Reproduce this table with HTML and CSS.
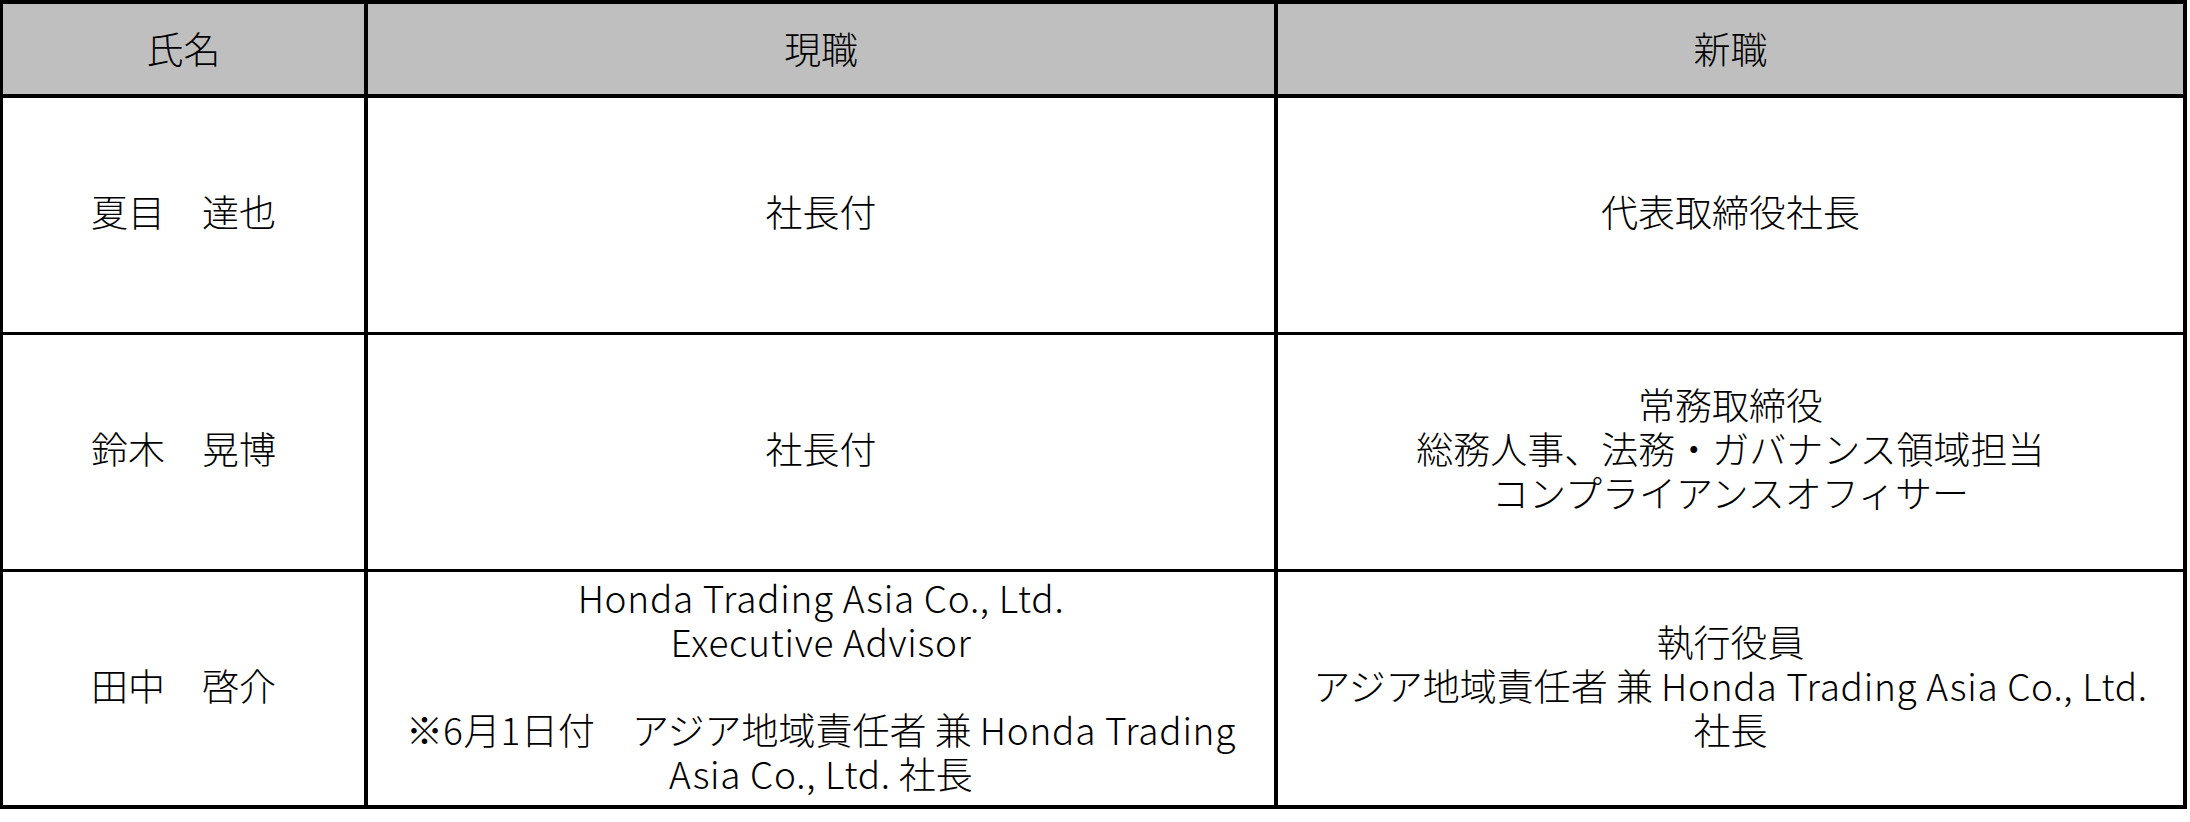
FILE: index.html
```html
<!DOCTYPE html>
<html lang="ja">
<head>
<meta charset="utf-8">
<title>役員人事</title>
<link rel="stylesheet" href="styles.css">
</head>
<body>
<div class="grid">
  <div class="cell head"><div class="txt">氏名</div></div>
  <div class="cell head"><div class="txt">現職</div></div>
  <div class="cell head"><div class="txt">新職</div></div>

  <div class="cell"><div class="txt">夏目　達也</div></div>
  <div class="cell"><div class="txt">社長付</div></div>
  <div class="cell"><div class="txt">代表取締役社長</div></div>

  <div class="cell"><div class="txt">鈴木　晃博</div></div>
  <div class="cell"><div class="txt">社長付</div></div>
  <div class="cell"><div class="txt">常務取締役<br>総務人事、法務・ガバナンス領域担当<br>コンプライアンスオフィサー</div></div>

  <div class="cell last"><div class="txt">田中　啓介</div></div>
  <div class="cell last"><div class="txt"><span class="lat">Honda Trading Asia Co., Ltd.</span><br><span class="lat">Executive Advisor</span><br><br>※<span class="lat">6</span>月<span class="lat">1</span>日付　アジア地域責任者 兼 <span class="lat">Honda Trading</span><br><span class="lat">Asia Co., Ltd.</span> 社長</div></div>
  <div class="cell last"><div class="txt">執行役員<br>アジア地域責任者 兼 <span class="lat">Honda Trading Asia Co., Ltd.</span><br>社長</div></div>
</div>
</body>
</html>
```
FILE: styles.css
```css
html, body {
  margin: 0;
  padding: 0;
  background: #ffffff;
}

body {
  font-family: "Noto Sans CJK JP", "Noto Sans", sans-serif;
  font-weight: 300;
  font-size: 37px;
  line-height: 44px;
  color: #000000;
}

.grid {
  display: grid;
  grid-template-columns: 365px 910px 909px;
  grid-template-rows: 94px 237px 237px 237px;
  width: max-content;
  border-left: 3px solid #000;
  border-top: 4px solid #000;
}

.cell {
  box-sizing: border-box;
  display: flex;
  align-items: center;
  justify-content: center;
  padding-bottom: 8px;
  border-right: 4px solid #000;
  border-bottom: 3px solid #000;
}

.txt {
  text-align: center;
  white-space: nowrap;
}

.head {
  background: #bfbfbf;
  border-bottom-width: 4px;
  padding-bottom: 2px;
}

.last {
  border-bottom-width: 4px;
}

.lat {
  letter-spacing: 0.7px;
}
```
